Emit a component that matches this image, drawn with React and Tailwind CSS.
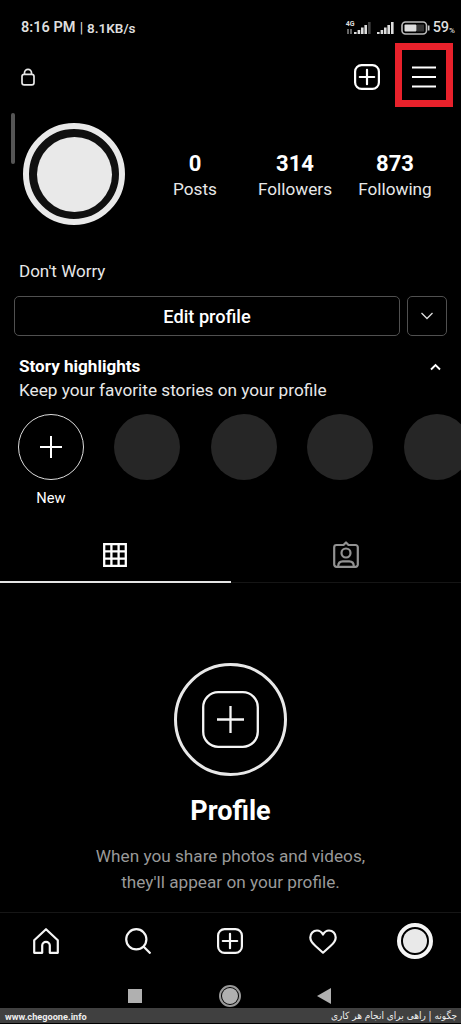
import React from "react";

const stats = [
  { value: "0", label: "Posts" },
  { value: "314", label: "Followers" },
  { value: "873", label: "Following" },
];

const AddIcon = ({ className }) => (
  <svg viewBox="0 0 26 26" fill="none" stroke="currentColor" strokeWidth="2.2" className={className}>
    <rect x="1.1" y="1.1" width="23.8" height="23.8" rx="6.5" />
    <path d="M13 5.8v14.4M5.8 13h14.4" strokeLinecap="round" />
  </svg>
);

const Signal = ({ weak }) => (
  <svg viewBox="0 0 17 12" className="w-[17px] h-3" fill="#ddd">
    <rect x="0" y="10" width="2.6" height="2" />
    <rect x="3.6" y="8" width="2.6" height="4" />
    <rect x="7" y="5.5" width="2.6" height="6.5" />
    <rect x="10.4" y="3" width="2.6" height="9" />
    <rect x="14" y="0" width="2.6" height="12" fill={weak ? "#444" : "#ddd"} />
  </svg>
);

const StatusBar = () => (
  <div className="h-[43px] pt-[13px] pl-[21px] pr-[6px] flex justify-between text-[#dedede]">
    <div className="h-[30px] flex items-center text-[14.5px] leading-[20px] font-semibold whitespace-pre">
      <span className="w-[56px]">8:16 PM</span>
      <span className="w-[9px] text-[14px] text-center font-normal">|</span>
      <span className="pl-px text-[13.5px]">8.1KB/s</span>
    </div>
    <div className="h-[30px] flex items-center">
      <div className="w-[8px] h-[14px] flex flex-col items-end text-[7px] leading-[7px] font-bold">
        <span>4G</span>
        <svg viewBox="0 0 5 5" className="w-[5px] h-[5px] mt-px mr-[3px]" stroke="#ccc" fill="none">
          <path d="M1 0v5M4 5V0" />
        </svg>
      </div>
      <div className="-ml-px"><Signal weak /></div>
      <div className="ml-[6px]"><Signal /></div>
      <svg viewBox="0 0 29 14" className="ml-[7px] w-[29px] h-[14px]" fill="none">
        <rect x="1" y="1" width="24.5" height="12" rx="3.5" stroke="#bbb" strokeWidth="1.6" />
        <rect x="3.5" y="3.5" width="12" height="7" rx="1" fill="#ddd" />
        <rect x="16" y="3.5" width="7" height="7" fill="#333" />
        <path d="M27.7 4.5v5" stroke="#ccc" strokeWidth="1.6" />
      </svg>
      <span className="ml-[3px] text-[14.5px] font-medium">59</span>
      <span className="text-[8px] font-medium pt-[5px]">%</span>
    </div>
  </div>
);

const Header = () => (
  <div className="h-16 pl-[21px] pr-2 flex items-center justify-between">
    <svg viewBox="0 0 14 18" className="w-[14px] h-[18px] mt-[3px]" fill="none" stroke="#e8e8e8" strokeWidth="1.7">
      <rect x="1" y="6.3" width="12" height="10.6" rx="2.2" />
      <path d="M3.5 6.3V4.8a3.5 3.5 0 0 1 7 0v1.5" />
    </svg>
    <div className="flex items-center">
      <AddIcon className="w-[26px] h-[26px] mr-[15px] mt-[3px]" />
      <button className="w-[58px] h-16 border-[7px] border-[#e8212b] flex items-center justify-center">
        <svg viewBox="0 0 24 22" className="w-6 h-[22px] mr-px mt-[3px]" stroke="#fff" strokeWidth="2.2">
          <path d="M0 1.5h24M0 11h24M0 20.5h24" />
        </svg>
      </button>
    </div>
  </div>
);

const ProfileInfo = () => (
  <div className="relative h-[145px] pt-4 pl-[23px] pr-4 flex">
    {/* Scroll indicator */}
    <div className="absolute left-[11px] top-[6px] w-[4px] h-[51px] rounded-full bg-[#555]"></div>
    <div className="w-[102px] h-[102px] rounded-full border-[6px] border-[#e9e9e9] bg-[#101010] flex items-center justify-center">
      <div className="w-[75px] h-[75px] rounded-full bg-[#e9e9e9]"></div>
    </div>
    <div className="ml-5 flex pt-[27px]">
      {stats.map((s) => (
        <div key={s.label} className="w-[100px] flex flex-col items-center">
          <span className="text-[22px] leading-[28px] font-bold">{s.value}</span>
          <span className="text-[17.2px] leading-[23px] text-[#e8e8e8]">{s.label}</span>
        </div>
      ))}
    </div>
  </div>
);

const Highlights = () => (
  <div className="h-[178px] pt-[18px]">
    <div className="pl-[19px] pr-[20px] flex items-center justify-between h-[25px]">
      <h3 className="text-[17.1px] font-bold">Story highlights</h3>
      <svg viewBox="0 0 11 8" className="w-[11px] h-2" fill="none" stroke="#fff" strokeWidth="1.9">
        <path d="M1 6.5l4.5-4.5L10 6.5" />
      </svg>
    </div>
    <p className="pl-[19px] text-[17.2px] leading-[23px] text-[#e8e8e8]">Keep your favorite stories on your profile</p>
    <div className="pl-[18px] mt-[12.4px] flex gap-[30.4px] overflow-hidden">
      <div className="shrink-0 w-[66px] flex flex-col items-center">
        <div className="w-[66px] h-[66px] rounded-full border border-[#ddd] flex items-center justify-center">
          <svg viewBox="0 0 22 22" className="w-[22px] h-[22px]" stroke="#fff" strokeWidth="2">
            <path d="M11 0v22M0 11h22" />
          </svg>
        </div>
        <span className="mt-[7px] text-[14.7px] leading-[22px]">New</span>
      </div>
      {[1, 2, 3, 4].map((n) => (
        <div key={n} className="shrink-0 w-[66px] h-[66px] rounded-full bg-[#262626]"></div>
      ))}
    </div>
  </div>
);

const Tabs = () => (
  <div className="h-[69px] flex">
    <div className="w-[230.5px] border-b-2 border-[#e5e5e5] flex justify-center pt-[29px]">
      <svg viewBox="0 0 24 24" className="w-6 h-6" fill="none" stroke="#fff" strokeWidth="2.3">
        <path d="M1.2 1.2h21.6v21.6H1.2zM8.4 1v22M15.6 1v22M1 8.4h22M1 15.6h22" />
      </svg>
    </div>
    <div className="flex-1 border-b border-[#151515] flex justify-center pt-[27px]">
      <svg viewBox="0 0 26 27" className="w-[26px] h-[27px]" fill="none" stroke="#929292" strokeWidth="2.2">
        <path d="M10.5 4H3.5a2.3 2.3 0 0 0-2.3 2.3v17.2a2.3 2.3 0 0 0 2.3 2.3h19a2.3 2.3 0 0 0 2.3-2.3V6.3a2.3 2.3 0 0 0-2.3-2.3h-7L13 1.5z" strokeLinejoin="round" />
        <circle cx="13" cy="12" r="4.5" />
        <path d="M5.2 25.5c0-3.5 1.8-5.2 4.5-5.2h6.6c2.700 0 4.500 1.700 4.500 5.200" />
      </svg>
    </div>
  </div>
);

const EmptyState = () => (
  <div className="h-[329px] pt-[80px] flex flex-col items-center">
    <div className="w-[113px] h-[113px] rounded-full border-[3px] border-[#e8e8e8] flex items-center justify-center">
      <svg viewBox="0 0 57 57" className="w-[57px] h-[57px]" fill="none" stroke="#f5f5f5" strokeWidth="2.3">
        <rect x="1.2" y="1.2" width="54.6" height="54.6" rx="15" />
        <path d="M28.5 15v27M15 28.5h27" />
      </svg>
    </div>
    <h2 className="mt-[19px] text-[27px] leading-[32px] font-bold">Profile</h2>
    <p className="mt-[16px] text-[17.2px] leading-[26px] text-center text-[#999]">
      When you share photos and videos,
      <br />
      they'll appear on your profile.
    </p>
  </div>
);

const BottomNav = () => (
  <div className="h-[61px] border-t border-[#161616] pt-[10px] flex text-[#f5f5f5]">
    <div className="w-[92.2px] h-9 flex items-center justify-center">
      <svg viewBox="0 0 26 26" className="w-[26px] h-[26px]" fill="none" stroke="currentColor" strokeWidth="2.2" strokeLinejoin="round">
        <path d="M1.2 12.2L13 1.2l11.8 11v12.6h-8v-7.2a3.8 3.8 0 0 0-7.6 0v7.2h-8z" />
      </svg>
    </div>
    <div className="w-[92.2px] h-9 flex items-center justify-center">
      <svg viewBox="0 0 26 26" className="w-[26px] h-[26px]" fill="none" stroke="currentColor" strokeWidth="2.2">
        <circle cx="11.3" cy="11.3" r="10.1" />
        <path d="M18.5 18.5l7 7" />
      </svg>
    </div>
    <div className="w-[92.2px] h-9 flex items-center justify-center">
      <AddIcon className="w-[26px] h-[26px]" />
    </div>
    <div className="w-[92.2px] h-9 flex items-center justify-center">
      <svg viewBox="0 0 28 25" className="w-7 h-[25px]" fill="none" stroke="currentColor" strokeWidth="2.2" strokeLinejoin="round">
        <path d="M20 1.5c-3 0-4.700 1.700-6 4-1.300-2.300-3-4-6-4-3.800 0-6.700 3-6.700 7 0 3.600 2.200 5.900 5.200 8.500L14 23.700l7.500-6.700c3-2.600 5.200-4.900 5.200-8.500 0-4-2.900-7-6.700-7z" />
      </svg>
    </div>
    <div className="w-[92.2px] h-9 flex items-center justify-center">
      <div className="w-9 h-9 rounded-full border-4 border-[#f5f5f5] flex items-center justify-center">
        <div className="w-6 h-6 rounded-full bg-[#e9e9e9]"></div>
      </div>
    </div>
  </div>
);

const SystemNav = () => (
  <div className="h-[35px] pt-[12px] pl-[128px] flex">
    <div className="w-[14px] h-[14px] mt-1 bg-[#b0b0b0]"></div>
    <div className="ml-[77px] w-[22px] h-[22px] rounded-full border-2 border-[#999] flex items-center justify-center">
      <div className="w-4 h-4 rounded-full bg-[#b0b0b0]"></div>
    </div>
    <svg viewBox="0 0 14 16" className="ml-[76px] mt-[3px] w-[14px] h-4" fill="#b0b0b0">
      <path d="M0 8L14 0v16z" />
    </svg>
  </div>
);

export default function App() {
  return (
    <div className="w-[461px] h-[1024px] overflow-hidden bg-black text-white font-['Roboto',sans-serif]">
      <StatusBar />
      <Header />
      <ProfileInfo />
      <div className="h-[84px] px-[14px] pt-[6px]">
        <p className="pl-[5px] text-[17px] leading-[26px] text-[#e8e8e8]">Don't Worry</p>
        <div className="mt-3 flex gap-[7px]">
          <button className="w-[386px] h-10 pt-[2px] border border-[#505050] rounded-[5px] text-[18.2px] font-medium">
            Edit profile
          </button>
          <button className="w-10 h-10 border border-[#505050] rounded-[5px] flex items-center justify-center">
            <svg viewBox="0 0 12 8" className="w-3 h-2" fill="none" stroke="#ddd" strokeWidth="1.3">
              <path d="M.5 1L6 6.5 11.5 1" />
            </svg>
          </button>
        </div>
      </div>
      <Highlights />
      <Tabs />
      <EmptyState />
      <BottomNav />
      <div className="relative h-[51px]">
        <SystemNav />
        {/* Site caption over the navigation keys */}
        <div className="absolute inset-x-0 bottom-px h-[15px] pl-[5px] pr-[4px] flex items-center justify-between bg-[#404040] text-[#eee]">
          <span className="pt-[2px] text-[9.2px] font-bold">www.chegoone.info</span>
          <span dir="rtl" className="text-[10px] font-['DejaVu_Sans_Condensed','DejaVu_Sans',sans-serif] tracking-[-0.3px]">چگونه | راهی برای انجام هر کاری</span>
        </div>
      </div>
    </div>
  );
}
